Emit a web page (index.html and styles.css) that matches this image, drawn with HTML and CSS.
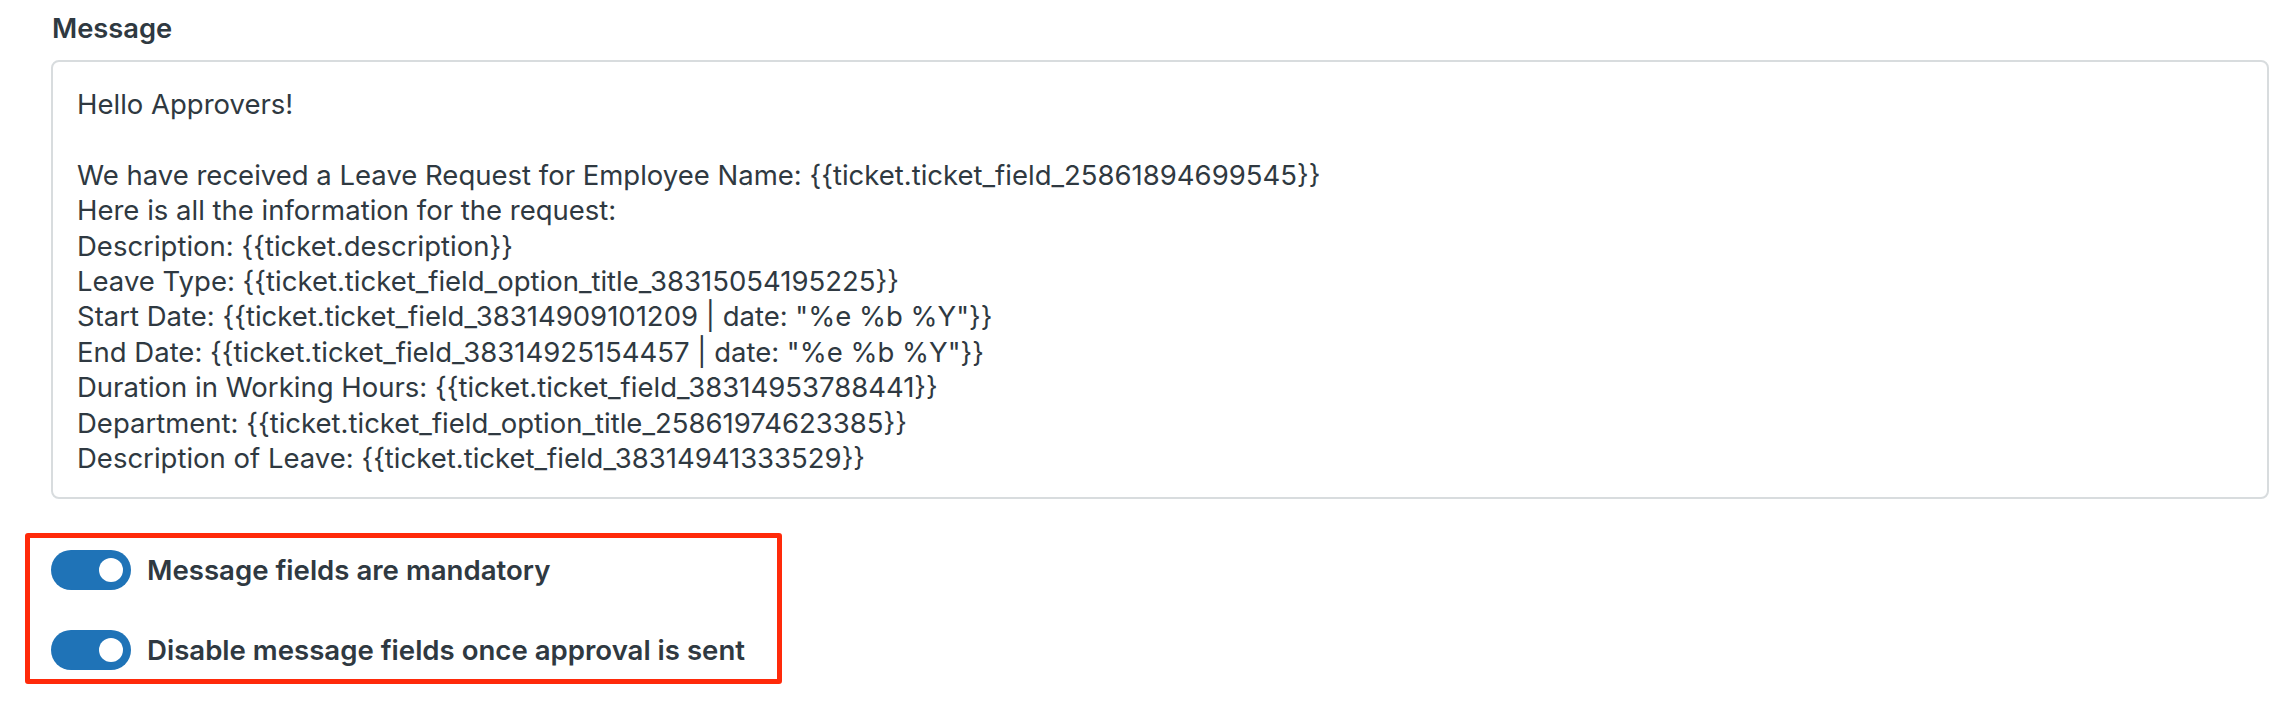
FILE: index.html
```html
<!DOCTYPE html>
<html lang="en">
<head>
<meta charset="utf-8">
<title>Message</title>
<link rel="stylesheet" href="styles.css">
</head>
<body>
<div class="page">
  <div class="field">
    <label class="field-label" for="msg">Message</label>
    <div class="textarea" id="msg">
      <div class="line">Hello Approvers!</div>
      <div class="line">&nbsp;</div>
      <div class="line">We have received a Leave Request for Employee Name: {{ticket.ticket_field_25861894699545}}</div>
      <div class="line">Here is all the information for the request:</div>
      <div class="line">Description: {{ticket.description}}</div>
      <div class="line">Leave Type: {{ticket.ticket_field_option_title_38315054195225}}</div>
      <div class="line">Start Date: {{ticket.ticket_field_38314909101209 | date: "%e %b %Y"}}</div>
      <div class="line">End Date: {{ticket.ticket_field_38314925154457 | date: "%e %b %Y"}}</div>
      <div class="line">Duration in Working Hours: {{ticket.ticket_field_38314953788441}}</div>
      <div class="line">Department: {{ticket.ticket_field_option_title_25861974623385}}</div>
      <div class="line">Description of Leave: {{ticket.ticket_field_38314941333529}}</div>
    </div>
  </div>
  <div class="highlight">
    <div class="toggle-row">
      <span class="toggle"><span class="knob"></span></span>
      <span class="toggle-label">Message fields are mandatory</span>
    </div>
    <div class="toggle-row">
      <span class="toggle"><span class="knob"></span></span>
      <span class="toggle-label">Disable message fields once approval is sent</span>
    </div>
  </div>
</div>
</body>
</html>
```
FILE: styles.css
```css
html, body {
  margin: 0;
  padding: 0;
  background: #ffffff;
}
body {
  font-family: Inter, "Noto Sans", "Liberation Sans", sans-serif;
  color: #2f3941;
}
.page {
  padding: 13px 23px 0 51px;
  display: flex;
  flex-direction: column;
}
.field {
  display: flex;
  flex-direction: column;
}
.field-label {
  font-size: 27.3px;
  font-weight: 600;
  line-height: 32px;
  margin-left: 1px;
  margin-bottom: 15px;
}
.textarea {
  border: 2px solid #d8dcde;
  border-radius: 8px;
  padding: 25px 24px 21px 24px;
  font-size: 27.5px;
  line-height: 35.4px;
  white-space: nowrap;
}
.line {
  height: 35.4px;
}
.highlight {
  box-sizing: border-box;
  margin-top: 34px;
  margin-left: -26px;
  width: 757px;
  border: 5px solid #ff2a0a;
  border-radius: 3px;
  padding: 12px 0 9px 21px;
  display: flex;
  flex-direction: column;
  gap: 40px;
}
.toggle-row {
  display: flex;
  align-items: center;
  gap: 16px;
}
.toggle {
  width: 80px;
  height: 40px;
  border-radius: 20px;
  background: #1f73b7;
  display: flex;
  align-items: center;
  justify-content: flex-end;
  padding-right: 8px;
  box-sizing: border-box;
  flex: none;
}
.knob {
  width: 24px;
  height: 24px;
  border-radius: 50%;
  background: #ffffff;
}
.toggle-label {
  font-size: 27.6px;
  font-weight: 600;
  line-height: 32px;
}
```
